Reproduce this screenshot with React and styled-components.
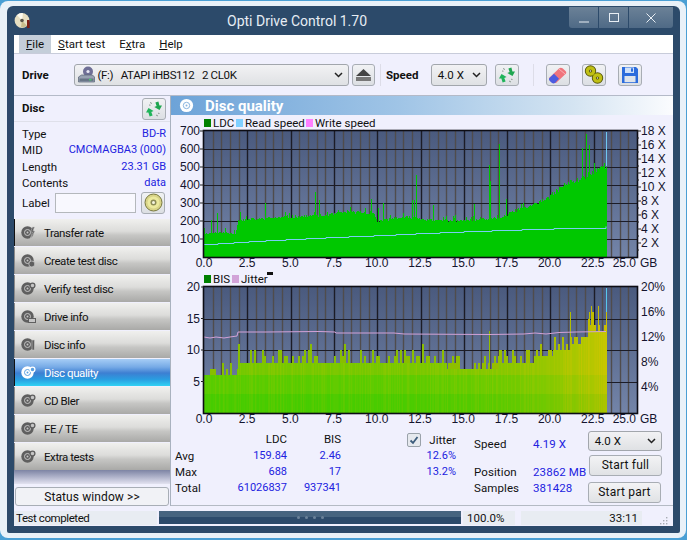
import React from 'react';
import styled, { createGlobalStyle } from 'styled-components';

const UI_FONT = 'Roboto, "Open Sans", sans-serif';

const GlobalStyle = createGlobalStyle`
  html, body {
    margin: 0;
    padding: 0;
    background: #4a9fd4;
  }
  body {
    width: 687px;
    height: 540px;
    overflow: hidden;
    font-family: ${UI_FONT};
    font-size: 11px;
    color: #111;
  }
`;

const Desktop = styled.div`
  width: 687px;
  height: 540px;
  padding: 1px 1px 2px 0;
  box-sizing: border-box;
  background: #4a9fd4;
`;
const Window = styled.div`
  height: 100%;
  box-sizing: border-box;
  padding: 5px 6px 5px 7px;
  background: #e9f1f8;
  border-radius: 8px;
`;
const Frame = styled.div`
  height: 100%;
  box-sizing: border-box;
  display: flex;
  flex-direction: column;
  padding: 0 7px 7px 7px;
  background: #2c4a6a;
  border-radius: 6px 6px 2px 2px;
`;
const TitleBar = styled.div`
  height: 29px;
  flex: none;
  display: flex;
  align-items: center;
  position: relative;
`;
const TitleText = styled.div`
  position: absolute;
  left: 213px;
  top: 5px;
  font-size: 14px;
  line-height: 20px;
  color: #e6edf4;
  white-space: nowrap;
`;
const WinButtons = styled.div`
  position: absolute;
  right: 0;
  top: 1px;
  display: flex;
  gap: 1px;
  height: 21px;
`;
const WinButton = styled.div`
  width: ${(p) => p.$w}px;
  height: 21px;
  background: linear-gradient(#6b8197, #4f6a86);
  display: flex;
  align-items: center;
  justify-content: center;
  border-radius: ${(p) => p.$r || '0'};
`;
const Client = styled.div`
  flex: 1;
  min-height: 0;
  display: flex;
  flex-direction: column;
  background: #f0f0fd;
`;
const MenuBar = styled.div`
  height: 18px;
  flex: none;
  display: flex;
  padding-left: 5px;
  background: #fff;
  border-bottom: 1px solid #c8ccda;
`;
const MenuItem = styled.div`
  padding: 0 ${(p) => p.$pad || 7}px;
  line-height: 18px;
  font-size: 11.5px;
  background: ${(p) => (p.$on ? '#c4ced9' : 'transparent')};
  u { text-underline-offset: 1px; }
`;
const Toolbar = styled.div`
  height: 41px;
  flex: none;
  display: flex;
  align-items: center;
  padding-left: 8px;
  border-bottom: 1px solid #b4bac8;
`;
const BoldLabel = styled.span`
  font-weight: 700;
  font-size: 11.5px;
  width: ${(p) => p.$w}px;
  flex: none;
`;
const DiscTitle = styled(BoldLabel)`
  margin-bottom: 2px;
`;
const Select = styled.div`
  display: flex;
  align-items: center;
  box-sizing: border-box;
  width: ${(p) => p.$w}px;
  height: ${(p) => p.$h || 22}px;
  padding: 0 5px 0 3px;
  flex: none;
  border: 1px solid #a2a6ac;
  border-radius: 3px;
  background: linear-gradient(#f2f2f4, #dfe1e4);
  font-size: 11.5px;
  span { flex: 1; white-space: pre; }
`;
const DriveName = styled.span`
  letter-spacing: -0.35px;
`;
const IconButton = styled.div`
  box-sizing: border-box;
  width: ${(p) => p.$w || 24}px;
  height: ${(p) => p.$h || 22}px;
  margin-left: ${(p) => p.$ml || 0}px;
  flex: none;
  display: flex;
  align-items: center;
  justify-content: center;
  border: 1px solid #a8adb4;
  border-radius: 3px;
  background: linear-gradient(#f1f2f4, #dcdfe3);
`;
const Sep = styled.div`
  width: 1px;
  height: 22px;
  margin: 0 ${(p) => p.$r}px 0 ${(p) => p.$l}px;
  background: #dddde8;
  flex: none;
`;
const Body = styled.div`
  flex: 1;
  min-height: 0;
  display: flex;
`;
const Sidebar = styled.div`
  width: 156px;
  flex: none;
  display: flex;
  flex-direction: column;
  & > * { flex: none; }
`;
const DiscHead = styled.div`
  height: 25px;
  display: flex;
  align-items: center;
  justify-content: space-between;
  padding: 0 4px 0 8px;
  border-bottom: 1px solid #dfe0ea;
`;
const DiscInfo = styled.div`
  height: 97px;
  box-sizing: border-box;
  padding: 4px 4px 0 8px;
`;
const InfoRow = styled.div`
  display: flex;
  justify-content: space-between;
  height: 16.4px;
  line-height: 16px;
  font-size: 11.5px;
  b { font-weight: 400; color: #2222e0; font-size: 11px; }
`;
const LabelRow = styled.div`
  display: flex;
  align-items: center;
  height: 22px;
  font-size: 11.5px;
  span { width: 33px; flex: none; }
`;
const LabelInput = styled.div`
  width: 81px;
  height: 20px;
  box-sizing: border-box;
  margin-right: 5px;
  border: 1px solid #b4b8bc;
  background: #f8f8fe;
`;
const NavList = styled.div`
  display: flex;
  flex-direction: column;
`;
const NavButton = styled.div`
  height: 27px;
  margin-bottom: 1px;
  display: flex;
  align-items: center;
  gap: 8px;
  padding-left: 6px;
  box-sizing: border-box;
  border-left: 1px solid ${(p) => (p.$edge ? '#111' : '#8a8a8a')};
  font-size: 11.5px;
  letter-spacing: -0.42px;
  color: ${(p) => (p.$active ? '#fff' : '#111')};
  background: ${(p) =>
    p.$active
      ? 'linear-gradient(#a6cdf6 0%, #76aae6 30%, #3d7fd2 52%, #2a9ce0 75%, #30d2f4 100%)'
      : 'linear-gradient(#f0f0ee 0%, #dcdcda 45%, #c6c6c4 60%, #a9a9a7 100%)'};
`;
const SideFade = styled.div`
  height: 14px;
  margin-top: -1px;
  background: linear-gradient(#7d84a4, #e2e2f0);
`;
const StatusWindow = styled.div`
  height: 19px;
  margin: 3px 1px 0;
  box-sizing: border-box;
  border: 1px solid #a8aeb6;
  border-radius: 3px;
  background: #f1f2f6;
  text-align: center;
  line-height: 18px;
  font-size: 12px;
  letter-spacing: 0.1px;
`;
const Main = styled.div`
  flex: 1;
  min-width: 0;
  display: flex;
  flex-direction: column;
  border-left: 1px solid #a9b2bf;
`;
const Header = styled.div`
  height: 19px;
  flex: none;
  display: flex;
  align-items: center;
  gap: 11px;
  padding-left: 8px;
  background: linear-gradient(90deg, #6da3d8 0%, #9fc4e6 45%, #d4e4f2 80%, #fbfcfe 100%);
  color: #fff;
  font-size: 15px;
  font-weight: 700;
`;
const Legend = styled.div`
  height: ${(p) => p.$h}px;
  flex: none;
  display: flex;
  align-items: center;
  padding-left: 33px;
  line-height: 14px;
  font-size: 11.5px;
`;
const Swatch = styled.i`
  width: 7px;
  height: 8px;
  margin-right: 2px;
  background: ${(p) => p.$c};
`;
const LegendText = styled.span`
  width: ${(p) => p.$w}px;
  flex: none;
  white-space: nowrap;
`;
const Marker = styled.i`
  width: 6px;
  height: 3px;
  background: #111;
  margin-bottom: 11px;
`;
const PlotSvg = styled.svg`
  display: block;
  overflow: visible;
  flex: none;
  text {
    font-family: "Liberation Sans", Arial, sans-serif;
    font-size: 12px;
    fill: #14142e;
  }
`;
const Stats = styled.div`
  flex: 1;
  display: flex;
  border-bottom: 1px solid #b4bac4;
`;
const StatGrid = styled.div`
  width: 170px;
  margin: 4px 0 0 4px;
  display: grid;
  grid-template-columns: 39px 73px 54px;
  grid-template-rows: 17px 16px 16px 16px;
  line-height: 16px;
  font-size: 11.5px;
`;
const Cell = styled.div`
  text-align: ${(p) => (p.$left ? 'left' : 'right')};
  color: ${(p) => (p.$blue ? '#2222e0' : '#111')};
  font-size: ${(p) => (p.$blue ? '11px' : 'inherit')};
  white-space: nowrap;
`;
const JitterCol = styled.div`
  width: 48px;
  margin: 0 0 0 63px;
  padding-top: 5px;
  display: grid;
  grid-auto-rows: 16px;
  line-height: 16px;
  font-size: 11.5px;
`;
const JitterHead = styled.div`
  display: flex;
  justify-content: space-between;
  align-items: center;
`;
const CheckBox = styled.div`
  width: 12px;
  height: 12px;
  border: 1px solid #9aa2aa;
  border-radius: 2px;
  background: #e6e9ee;
  display: flex;
  align-items: center;
  justify-content: center;
  margin-left: -1px;
`;
const SpeedCol = styled.div`
  width: 113px;
  margin-left: 18px;
  padding-top: 9px;
  line-height: 16px;
  font-size: 11.5px;
  letter-spacing: 0.1px;
`;
const SpeedRow = styled.div`
  display: flex;
  margin-bottom: ${(p) => p.$mb || 0}px;
  span:first-child { width: 59px; flex: none; }
  span:last-child { color: #2222e0; white-space: nowrap; }
`;
const ActionCol = styled.div`
  padding: 4px 0 0 1px;
  display: flex;
  flex-direction: column;
  align-items: flex-start;
`;
const ActionButton = styled.div`
  box-sizing: border-box;
  width: 73px;
  height: 21px;
  margin: ${(p) => p.$m};
  border: 1px solid #a8adb4;
  border-radius: 3px;
  background: linear-gradient(#f3f3f5, #e0e2e5);
  text-align: center;
  line-height: 19px;
  font-size: 12px;
  letter-spacing: 0.2px;
`;
const StatusBar = styled.div`
  height: 19px;
  padding-bottom: 1px;
  flex: none;
  display: flex;
  align-items: flex-end;
  font-size: 11.5px;
`;
const StatusCell = styled.div`
  box-sizing: border-box;
  width: ${(p) => p.$w}px;
  height: 14px;
  line-height: 14px;
  margin-right: ${(p) => p.$r || 0}px;
  padding: 0 ${(p) => p.$pr || 0}px 0 ${(p) => p.$pl || 0}px;
  background: #e8ecf2;
  letter-spacing: ${(p) => p.$ls || 0}px;
  text-align: ${(p) => p.$align || 'left'};
  white-space: nowrap;
`;
const Progress = styled.div`
  width: 302px;
  height: 13px;
  margin: 0 2px 1px 0;
  flex: none;
  display: flex;
  align-items: flex-start;
  justify-content: center;
  gap: 5px;
  padding-top: 5px;
  box-sizing: border-box;
  background: linear-gradient(#47647f 0 50%, #2d4b6b 50% 100%);
`;
const Dot = styled.i`
  width: 3px;
  height: 3px;
  border-radius: 50%;
  background: #6b8299;
`;
const Grip = styled.svg`
  margin-left: 16px;
  flex: none;
`;

// Small seeded random so the chart noise stays the same on every render
const makeRand = (seed) => () => {
  seed = (seed * 1664525 + 1013904223) % 4294967296;
  return seed / 4294967296;
};

const lerpTable = (table, x) => {
  for (let i = 1; i < table.length; i++) {
    if (x <= table[i][0]) {
      const [x0, y0] = table[i - 1];
      const [x1, y1] = table[i];
      return y0 + ((y1 - y0) * (x - x0)) / (x1 - x0);
    }
  }
  return table[table.length - 1][1];
};

const PLOT_W = 433;
const PLOT_H = 126;
const PX_GB = PLOT_W / 25;
const END_X = 402;

const LDC_BASE = [
  [0, 132], [1, 138], [1.8, 130], [1.95, 205], [3, 212], [5, 226], [7, 232], [8, 248], [9, 252], [9.8, 240],
  [10, 198], [11, 218], [12, 222], [13, 206], [15, 203], [16.5, 212], [17.2, 222], [18, 262], [19, 292],
  [19.9, 333], [20.8, 405], [21.8, 438], [22.7, 494], [23.4, 520],
];
const LDC_SPIKES = {
  0: 160, 7: 205, 13: 245, 36: 250, 61: 300, 111: 360, 115: 317, 167: 322, 174: 270, 179: 300, 208: 317, 210: 318,
  212: 455, 229: 290, 270: 295, 285: 510, 286: 420, 295: 628, 302: 325, 378: 605, 382: 683, 385: 620, 390: 520,
};

const ldcPath = () => {
  const rand = makeRand(11);
  let d = `M0 ${PLOT_H}`;
  for (let x = 0; x <= END_X; x++) {
    const gb = x / PX_GB;
    let v = lerpTable(LDC_BASE, gb) * (0.96 + rand() * 0.07);
    if (rand() > 0.93) v += 22;
    if (LDC_SPIKES[x]) v = LDC_SPIKES[x];
    const y = Math.max(1, PLOT_H - v * 0.18).toFixed(1);
    d += `L${x} ${y}L${x + 1} ${y}`;
  }
  return `${d}L${END_X + 1} ${PLOT_H}Z`;
};

const READ_STEPS = [
  [0, 113], [14, 112], [30, 111], [45, 110], [62, 109], [82, 108], [102, 107], [122, 106], [145, 105], [170, 104],
  [192, 103], [212, 102], [236, 101], [260, 100], [288, 99], [318, 98], [350, 97], [402, 95],
];

const readPath = () => {
  let d = '';
  READ_STEPS.forEach(([x, y], i) => {
    const next = READ_STEPS[i + 1] ? READ_STEPS[i + 1][0] : END_X;
    d += `${i ? 'L' : 'M'}${x} ${y + 0.5}L${next} ${y + 0.5}`;
  });
  return d;
};

const BIS_LEVEL = [
  [0, 6], [1.85, 6], [1.95, 8], [7.6, 8], [14, 7.5], [15, 7], [17, 7.5], [18.5, 8], [19.5, 9], [20.8, 10],
  [21.5, 11], [22.4, 13], [23.4, 13],
];
const mix = (a, b, t) => {
  const c = a.map((v, i) => Math.round(v + (b[i] - v) * Math.min(t, 1)));
  return `rgb(${c[0]},${c[1]},${c[2]})`;
};

const bisBars = () => {
  const rand = makeRand(37);
  const bars = [];
  const unit = PLOT_H / 20;
  let r = 0;
  for (let x = 0; x <= END_X; x++) {
    const gb = x / PX_GB;
    const level = Math.round(lerpTable(BIS_LEVEL, gb));
    // samples are wider than one pixel, so hold the value over two columns
    if (x % 2 === 0) r = rand();
    let peak = level;
    if (r > 0.55) peak = level + 1;
    if (r > 0.82) peak = level + 2;
    if (gb > 1.9 && r > 0.97) peak = level + 3;
    if (gb > 21 && r > 0.75) peak = level + 3;
    if (x === 366 || x === 387 || x === 394) peak = x === 366 ? 16 : 17;
    if (x === 285) peak = 13;
    const heat = Math.pow(Math.min(gb / 23.4, 1), 5);
    const jit = Math.pow(rand(), 2) * 0.22;
    const floor = Math.min(level, 6);
    const parts = [
      [0, 3, mix([70, 204, 0], [170, 196, 0], heat + jit)],
      [3, floor, mix([88, 204, 0], [186, 198, 0], heat + jit)],
      [floor, level, mix([116, 200, 0], [198, 198, 0], heat + jit)],
      [level, peak, mix([136, 190, 0], [206, 190, 0], heat)],
    ];
    parts.forEach(([a, b, fill]) => {
      if (b > a) {
        bars.push(<rect key={`${x}-${a}`} x={x} y={PLOT_H - b * unit} width={1} height={(b - a) * unit} fill={fill} shapeRendering="crispEdges" />);
      }
    });
  }
  return bars;
};

const JITTER_POINTS = [
  [0, 50], [6, 51], [12, 50], [20, 51], [26, 50], [33, 49], [34, 45], [62, 45], [115, 44.5], [131, 45], [132, 46],
  [190, 46], [200, 47], [285, 47.5], [320, 47], [331, 46], [342, 47], [355, 45.5], [372, 45], [402, 44.5],
];

const jitterPath = () =>
  JITTER_POINTS.map(([x, y], i) => `${i ? 'L' : 'M'}${x} ${y}`).join('');

const Grid = ({ rows, id }) => {
  const minor = [];
  const major = [];
  for (let i = 1; i < 50; i++) {
    const x = Math.round(i * (PLOT_W / 50)) + 0.5;
    if (i % 5 === 0) major.push(x);
    else minor.push(x);
  }
  return (
    <>
      <defs>
        <linearGradient id={id} x1="0" y1="0" x2="0" y2="1">
          <stop offset="0" stopColor="#4a5a7e" />
          <stop offset="1" stopColor="#7384a8" />
        </linearGradient>
      </defs>
      <rect width={PLOT_W} height={PLOT_H} fill={`url(#${id})`} />
      {minor.map((x) => (
        <line key={x} x1={x} x2={x} y1={0} y2={PLOT_H} stroke="#504c4c" strokeWidth="1.4" />
      ))}
      {major.map((x) => (
        <line key={x} x1={x} x2={x} y1={0} y2={PLOT_H} stroke="#1c1c26" strokeWidth="1.4" />
      ))}
      {rows.map((y) => (
        <line key={y} x1={0} x2={PLOT_W} y1={Math.round(y) + 0.5} y2={Math.round(y) + 0.5} stroke="#1c1c26" strokeWidth="1" />
      ))}
    </>
  );
};

const X_LABELS = ['0.0', '2.5', '5.0', '7.5', '10.0', '12.5', '15.0', '17.5', '20.0', '22.5'];

const XAxis = () => (
  <>
    {X_LABELS.map((t, i) => (
      <text key={t} x={i * 43.2} y={PLOT_H + 10} textAnchor="middle">{t}</text>
    ))}
    <text x={432} y={PLOT_H + 10} textAnchor="end">25.0</text>
    <text x={436} y={PLOT_H + 10}>GB</text>
  </>
);

const Border = () => (
  <rect x={-0.5} y={-0.5} width={PLOT_W + 1} height={PLOT_H + 1} fill="none" stroke="#0c0c14" strokeWidth="1.6" />
);

const LdcChart = () => {
  const rows = [1, 2, 3, 4, 5, 6].map((i) => PLOT_H - i * 18);
  const rightTicks = [];
  for (let i = 1; i <= 18; i++) rightTicks.push(i);
  return (
    <PlotSvg width={502} height={140} viewBox="-33 0 502 140">
      <Grid rows={rows} id="plotTop" />
      <path d={ldcPath()} fill="#00c800" shapeRendering="crispEdges" />
      <path d={readPath()} fill="none" stroke="#78cdf4" strokeWidth="1" />
      <line x1={402.5} x2={402.5} y1={1} y2={35} stroke="#70c8f0" strokeWidth="1" />
      <Border />
      {[100, 200, 300, 400, 500, 600, 700].map((v) => (
        <g key={v}>
          <line x1={-4} x2={0} y1={PLOT_H - v * 0.18} y2={PLOT_H - v * 0.18} stroke="#222" />
          <text x={-4} y={PLOT_H - v * 0.18 + 4} textAnchor="end">{v}</text>
        </g>
      ))}
      {rightTicks.map((v) => (
        <line key={v} x1={PLOT_W} x2={PLOT_W + (v % 2 ? 2 : 4)} y1={PLOT_H - v * 7} y2={PLOT_H - v * 7} stroke="#222" />
      ))}
      {rightTicks.filter((v) => v % 2 === 0).map((v) => (
        <text key={v} x={PLOT_W + 4} y={PLOT_H - v * 7 + 4}>{v} X</text>
      ))}
      <XAxis />
    </PlotSvg>
  );
};

const BisChart = () => {
  const unit = PLOT_H / 20;
  return (
    <PlotSvg width={502} height={140} viewBox="-33 0 502 140">
      <Grid rows={[5, 10, 15].map((v) => PLOT_H - v * unit)} id="plotBottom" />
      <line x1={402.5} x2={402.5} y1={1} y2={44} stroke="#58c8ec" strokeWidth="1" />
      {bisBars()}
      <path d={jitterPath()} fill="none" stroke="#d3a2d6" strokeWidth="1" />
      <Border />
      {[5, 10, 15, 20].map((v) => (
        <g key={v}>
          <line x1={-3} x2={0} y1={PLOT_H - v * unit} y2={PLOT_H - v * unit} stroke="#222" />
          <text x={-4} y={PLOT_H - v * unit + 4} textAnchor="end">{v}</text>
        </g>
      ))}
      {['20%', '16%', '12%', '8%', '4%'].map((t, i) => (
        <text key={t} x={PLOT_W + 4} y={4 + i * 25}>{t}</text>
      ))}
      <XAxis />
    </PlotSvg>
  );
};

const Chevron = () => (
  <svg width="9" height="6" viewBox="0 0 9 6">
    <path d="M1 1l3.5 3.5L8 1" fill="none" stroke="#222" strokeWidth="1.5" />
  </svg>
);

const RefreshIcon = () => (
  <svg width="18" height="18" viewBox="0 0 18 18">
    <path d="M3.5 8L1 12.5h2.4l1.2 4 3-1-1.3-3.6 2.3-.9z" fill="#1fb45a" />
    <path d="M14.5 10L17 5.5h-2.6l-1-4-3 1 1.2 3.5-2.3 1z" fill="#1fa650" />
    <path d="M5 2.5l2 1M4 5l1.5.2M13 16l-2-1M14.5 13.5L13 13.2" stroke="#8a9a90" strokeWidth="1" />
  </svg>
);

const DriveIcon = () => (
  <svg width="17" height="17" viewBox="0 0 17 17">
    <circle cx="10" cy="5.5" r="5" fill="#6f6f96" />
    <circle cx="10" cy="5.5" r="1.6" fill="#e8e8f4" />
    <path d="M0.5 11l3-2h11l2 2v5H.5z" fill="#98a2b2" stroke="#586274" strokeWidth=".7" />
    <rect x="1.5" y="12.5" width="14" height="2.6" fill="#687486" />
    <rect x="11" y="13" width="2.5" height="1.4" fill="#42d26a" />
  </svg>
);

const EjectIcon = () => (
  <svg width="17" height="14" viewBox="0 0 17 14">
    <path d="M8.5 1L16 8H1z" fill="#444" />
    <rect x="1" y="9" width="15" height="4" fill="#777" />
  </svg>
);

const EraserIcon = () => (
  <svg width="20" height="18" viewBox="0 0 20 18">
    <path d="M1 12L11 2.5c1-1 2.5-1 3.5-.2l3 2.6c1 1 1 2.2 0 3.2L8 17H5z" fill="#f0747c" />
    <path d="M1.2 12.3L6 7.8l5 5L7 17c-1 .6-2 .6-3 0L1.8 15c-.9-.9-1-1.9-.6-2.7z" fill="#4c5ce0" />
    <path d="M11 3l6 5" stroke="#f8b0b4" strokeWidth="1" />
  </svg>
);

const ChainIcon = () => (
  <svg width="20" height="19" viewBox="0 0 20 19">
    <g fill="none" stroke="#55550c" strokeWidth="5">
      <circle cx="6.5" cy="6" r="3.2" />
      <circle cx="13.5" cy="13" r="3.2" />
    </g>
    <g fill="none" stroke="#c0c014" strokeWidth="3.2">
      <circle cx="6.5" cy="6" r="3.2" />
      <circle cx="13.5" cy="13" r="3.2" />
    </g>
  </svg>
);

const FloppyIcon = () => (
  <svg width="18" height="18" viewBox="0 0 18 18">
    <path d="M1 1h14l2 2v14H1z" fill="#2c6cdc" />
    <rect x="4" y="1.5" width="9" height="5.5" fill="#cfe0f8" />
    <rect x="10" y="2.3" width="2" height="3.4" fill="#2c6cdc" />
    <rect x="3.5" y="10" width="11" height="6.2" fill="#dfe4ea" />
  </svg>
);

const SmallDisc = () => (
  <svg width="21" height="21" viewBox="0 0 21 21">
    <circle cx="10.5" cy="10.5" r="8.5" fill="#d8d488" stroke="#77773e" strokeWidth="1" />
    <circle cx="10.5" cy="10.5" r="6" fill="#ecea9e" />
    <circle cx="10.5" cy="10.5" r="3" fill="#8c8c58" />
    <circle cx="10.5" cy="10.5" r="1.5" fill="#f4f4e0" />
  </svg>
);

const AppDisc = () => (
  <svg width="17" height="17" viewBox="0 0 17 17">
    <circle cx="8" cy="8.5" r="7.4" fill="#e6dfc2" />
    <path d="M8 8.5L3 3a7.4 7.4 0 0 1 6-1.8z" fill="#fdfbf0" />
    <path d="M8 8.5l5 5.3a7.4 7.4 0 0 1-6 1.1z" fill="#c9bd8c" />
    <circle cx="8" cy="8.5" r="1.8" fill="#5a5448" />
    <rect x="13" y="8" width="2.6" height="8" fill="#7c1e14" />
  </svg>
);

// Grey disc with a small badge, one badge per test page
const NavIcon = ({ kind, white }) => {
  const c = white ? '#fff' : '#5f5f5f';
  const hole = white ? '#5aa0e0' : '#c6c6c6';
  return (
    <svg width="15" height="15" viewBox="0 0 15 15" style={{ flex: 'none' }}>
      <circle cx="6.5" cy="7.5" r="6.2" fill={c} />
      <circle cx="6.5" cy="7.5" r="3" fill="none" stroke={hole} strokeWidth="1" />
      <circle cx="6.5" cy="7.5" r="1" fill={hole} />
      {kind === 'rate' && <path d="M11.5 2l-2 5h2l-2 6 4.5-7h-2l1.5-4z" fill={c} stroke={hole} strokeWidth=".5" />}
      {kind === 'create' && <circle cx="10.8" cy="11" r="3" fill={c} stroke={hole} strokeWidth=".8" />}
      {kind === 'disc' && (
        <g fill="none" stroke={c} strokeWidth="1.3">
          <circle cx="11.5" cy="4.5" r="2.4" fill={hole} />
        </g>
      )}
      {kind === 'drive' && <rect x="7.5" y="9.5" width="7" height="4" fill={hole} stroke={c} strokeWidth="1" />}
      {kind === 'info' && <rect x="11" y="3" width="2.4" height="10" fill={c} stroke={hole} strokeWidth=".6" />}
    </svg>
  );
};

const NAV = [
  ['Transfer rate', 'rate'],
  ['Create test disc', 'create'],
  ['Verify test disc', 'disc'],
  ['Drive info', 'drive'],
  ['Disc info', 'info'],
  ['Disc quality', 'disc'],
  ['CD Bler', 'disc'],
  ['FE / TE', 'disc'],
  ['Extra tests', 'disc'],
];

const App = () => (
  <Desktop>
    <GlobalStyle />
    <Window>
      <Frame>
        <TitleBar>
          <AppDisc />
          <TitleText>Opti Drive Control 1.70</TitleText>
          <WinButtons>
            <WinButton $w={29} $r="0 0 0 3px">
              <svg width="10" height="10" viewBox="0 0 10 10"><path d="M0 9h10" stroke="#e8eef4" strokeWidth="1" /></svg>
            </WinButton>
            <WinButton $w={29}>
              <svg width="10" height="10" viewBox="0 0 10 10"><rect x=".5" y=".5" width="9" height="8" fill="none" stroke="#e8eef4" /></svg>
            </WinButton>
            <WinButton $w={44} $r="0 0 3px 0">
              <svg width="10" height="10" viewBox="0 0 10 10"><path d="M.5.5l9 9M9.5.5l-9 9" stroke="#e8eef4" strokeWidth="1" /></svg>
            </WinButton>
          </WinButtons>
        </TitleBar>
        <Client>
          <MenuBar>
            <MenuItem $on><u>F</u>ile</MenuItem>
            <MenuItem><u>S</u>tart test</MenuItem>
            <MenuItem>E<u>x</u>tra</MenuItem>
            <MenuItem><u>H</u>elp</MenuItem>
          </MenuBar>
          <Toolbar>
            <BoldLabel $w={52}>Drive</BoldLabel>
            <Select $w={275}>
              <DriveIcon />
              <DriveName>{' (F:)   ATAPI iHBS112   2 CL0K'}</DriveName>
              <Chevron />
            </Select>
            <IconButton $ml={3} $w={23}><EjectIcon /></IconButton>
            <Sep $l={5} $r={5} />
            <BoldLabel $w={45}>Speed</BoldLabel>
            <Select $w={56}>
              <span>{' 4.0 X'}</span>
              <Chevron />
            </Select>
            <IconButton $ml={8}><RefreshIcon /></IconButton>
            <Sep $l={14} $r={12} />
            <IconButton><EraserIcon /></IconButton>
            <IconButton $ml={12}><ChainIcon /></IconButton>
            <IconButton $ml={12}><FloppyIcon /></IconButton>
          </Toolbar>
          <Body>
            <Sidebar>
              <DiscHead>
                <DiscTitle>Disc</DiscTitle>
                <IconButton><RefreshIcon /></IconButton>
              </DiscHead>
              <DiscInfo>
                <InfoRow><span>Type</span><b>BD-R</b></InfoRow>
                <InfoRow><span>MID</span><b>CMCMAGBA3 (000)</b></InfoRow>
                <InfoRow><span>Length</span><b>23.31 GB</b></InfoRow>
                <InfoRow><span>Contents</span><b>data</b></InfoRow>
                <LabelRow>
                  <span>Label</span>
                  <LabelInput />
                  <IconButton><SmallDisc /></IconButton>
                </LabelRow>
              </DiscInfo>
              <NavList>
                {NAV.map(([name, kind]) => (
                  <NavButton key={name} $active={name === 'Disc quality'} $edge={name === 'Disc quality' || name === 'Transfer rate'}>
                    <NavIcon kind={kind} white={name === 'Disc quality'} />
                    {name}
                  </NavButton>
                ))}
              </NavList>
              <SideFade />
              <StatusWindow>{'Status window >>'}</StatusWindow>
            </Sidebar>
            <Main>
              <Header>
                <svg width="15" height="15" viewBox="0 0 15 15">
                  <circle cx="7.5" cy="7.5" r="6.6" fill="#fff" />
                  <circle cx="7.5" cy="7.5" r="3.2" fill="none" stroke="#8ab4de" />
                  <circle cx="7.5" cy="7.5" r="1" fill="#8ab4de" />
                </svg>
                Disc quality
              </Header>
              <Legend $h={16}>
                <Swatch $c="#008000" /><LegendText $w={23}>LDC</LegendText>
                <Swatch $c="#80d0ff" /><LegendText $w={61}>Read speed</LegendText>
                <Swatch $c="#ff80ff" /><LegendText>Write speed</LegendText>
              </Legend>
              <LdcChart />
              <Legend $h={16}>
                <Swatch $c="#008000" /><LegendText $w={19}>BIS</LegendText>
                <Swatch $c="#d2a3d8" /><LegendText $w={26}>Jitter</LegendText>
                <Marker />
              </Legend>
              <BisChart />
              <Stats>
                <StatGrid>
                  <span /><Cell>LDC</Cell><Cell>BIS</Cell>
                  <Cell $left>Avg</Cell><Cell $blue>159.84</Cell><Cell $blue>2.46</Cell>
                  <Cell $left>Max</Cell><Cell $blue>688</Cell><Cell $blue>17</Cell>
                  <Cell $left>Total</Cell><Cell $blue>61026837</Cell><Cell $blue>937341</Cell>
                </StatGrid>
                <JitterCol>
                  <JitterHead>
                    <CheckBox>
                      <svg width="10" height="9" viewBox="0 0 10 9"><path d="M1.5 4.5L4 7l4.5-6" fill="none" stroke="#3c5c7c" strokeWidth="1.8" /></svg>
                    </CheckBox>
                    <span>Jitter</span>
                  </JitterHead>
                  <Cell $blue>12.6%</Cell>
                  <Cell $blue>13.2%</Cell>
                </JitterCol>
                <SpeedCol>
                  <SpeedRow $mb={12}><span>Speed</span><span>4.19 X</span></SpeedRow>
                  <SpeedRow><span>Position</span><span>23862 MB</span></SpeedRow>
                  <SpeedRow><span>Samples</span><span>381428</span></SpeedRow>
                </SpeedCol>
                <ActionCol>
                  <Select $w={74} $h={20}>
                    <span>{' 4.0 X'}</span>
                    <Chevron />
                  </Select>
                  <ActionButton $m="4px 0 0 1px">Start full</ActionButton>
                  <ActionButton $m="6px 0 0 0">Start part</ActionButton>
                </ActionCol>
              </Stats>
            </Main>
          </Body>
          <StatusBar>
            <StatusCell $w={143} $r={2} $pl={2} $ls={-0.42}>Test completed</StatusCell>
            <Progress><Dot /><Dot /><Dot /><Dot /></Progress>
            <StatusCell $w={52} $r={6} $pl={4}>100.0%</StatusCell>
            <StatusCell $w={121} $align="right" $pr={4}>33:11</StatusCell>
            <Grip width="10" height="10" viewBox="0 0 10 10">
              <g fill="#a8acb4">
                <rect x="8" y="8" width="1.4" height="1.4" /><rect x="5" y="8" width="1.4" height="1.4" /><rect x="2" y="8" width="1.4" height="1.4" />
                <rect x="8" y="5" width="1.4" height="1.4" /><rect x="5" y="5" width="1.4" height="1.4" /><rect x="8" y="2" width="1.4" height="1.4" />
              </g>
            </Grip>
          </StatusBar>
        </Client>
      </Frame>
    </Window>
  </Desktop>
);

export default App;
